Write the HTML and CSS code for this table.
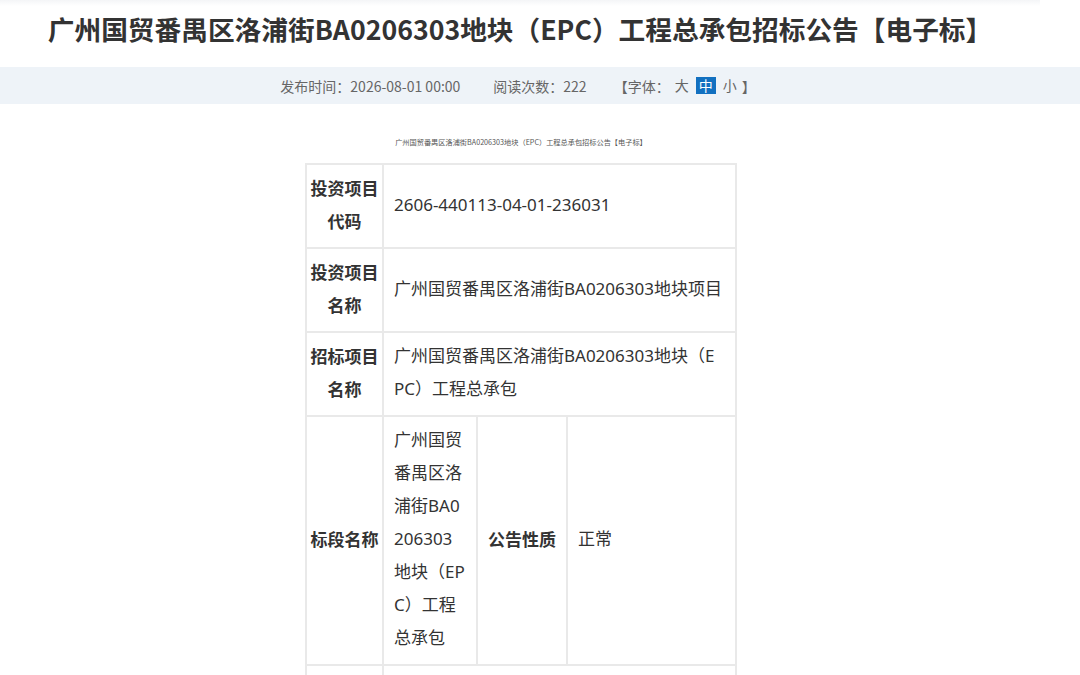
FILE: index.html
```html
<!DOCTYPE html>
<html lang="zh-CN">
<head>
<meta charset="utf-8">
<title>招标公告</title>
<link rel="stylesheet" href="styles.css">
</head>
<body>
<div class="page">
  <h1 class="title">广州国贸番禺区洛浦街BA0206303地块（EPC）工程总承包招标公告【电子标】</h1>
  <div class="infobar">
    <div class="info-inner">
      <span class="info-item">发布时间：2026-08-01 00:00</span>
      <span class="info-item">阅读次数：222</span>
      <span class="info-font">【字体：<span class="fs">大</span><span class="fs active">中</span><span class="fs">小</span>】</span>
    </div>
  </div>
  <div class="content">
    <p class="subtitle">广州国贸番禺区洛浦街BA0206303地块（EPC）工程总承包招标公告【电子标】</p>
    <table class="info-table">
      <colgroup>
        <col class="c1"><col class="c2"><col class="c3"><col class="c4">
      </colgroup>
      <tr>
        <th>投资项目代码</th>
        <td colspan="3">2606-440113-04-01-236031</td>
      </tr>
      <tr>
        <th>投资项目名称</th>
        <td colspan="3">广州国贸番禺区洛浦街BA0206303地块项目</td>
      </tr>
      <tr>
        <th>招标项目名称</th>
        <td colspan="3">广州国贸番禺区洛浦街BA0206303地块（EPC）工程总承包</td>
      </tr>
      <tr>
        <th>标段名称</th>
        <td class="wrap">广州国贸番禺区洛浦街BA0206303地块（EPC）工程总承包</td>
        <th>公告性质</th>
        <td>正常</td>
      </tr>
      <tr>
        <th>&nbsp;</th>
        <td colspan="3">&nbsp;</td>
      </tr>
    </table>
  </div>
</div>
</body>
</html>
```

FILE: styles.css
```css
html, body {
  margin: 0;
  padding: 0;
  background: #ffffff;
}
body {
  font-family: "Noto Sans", "Noto Sans CJK SC", sans-serif;
  color: #333333;
}
.page {
  width: 1040px;
}
.title {
  margin: 0;
  height: 67px;
  line-height: 58px;
  font-size: 26.7px;
  font-weight: 700;
  text-align: center;
  color: #333333;
  font-family: "Noto Sans CJK SC", sans-serif;
  background: linear-gradient(#f4f5f7 0, #ffffff 6px);
}
.infobar {
  width: 1080px;
  height: 37px;
  background: #eef3f8;
}
.info-inner {
  width: 1036px;
  display: flex;
  justify-content: center;
  align-items: center;
  height: 37px;
  font-size: 14px;
  color: #666666;
  gap: 33px;
  padding-right: 4px;
  font-family: "Noto Sans CJK SC", sans-serif;
}
.info-font {
  display: flex;
  align-items: center;
  margin-left: -6px;
}
.fs {
  display: inline-block;
  padding: 0 3px;
  margin: 0 2px;
  line-height: 17px;
}
.fs.active {
  background: #1270c0;
  color: #ffffff;
}
.content {
  display: flex;
  flex-direction: column;
  align-items: center;
  padding-left: 2px;
}
.subtitle {
  margin: 33px 0 16px;
  font-size: 7.2px;
  line-height: 10px;
  color: #555555;
  font-family: "Noto Sans CJK SC", sans-serif;
}
.info-table {
  border-collapse: collapse;
  width: 430px;
  table-layout: fixed;
  font-size: 17px;
  line-height: 33px;
  color: #333333;
}
.c1 { width: 77px; }
.c2 { width: 94px; }
.c3 { width: 90px; }
.c4 { width: 169px; }
.info-table th,
.info-table td {
  border: 2px solid #e9e9e9;
  padding: 6px 6px 10px;
  vertical-align: middle;
}
.info-table th {
  font-weight: 700;
  text-align: center;
  color: #333333;
  font-family: "Noto Sans CJK SC", sans-serif;
  padding: 6px 2px 10px;
}
.info-table td {
  text-align: left;
  padding-left: 10px;
  padding-right: 12px;
  word-break: break-all;
}
.info-table td.wrap {
  padding-right: 10px;
}
```
